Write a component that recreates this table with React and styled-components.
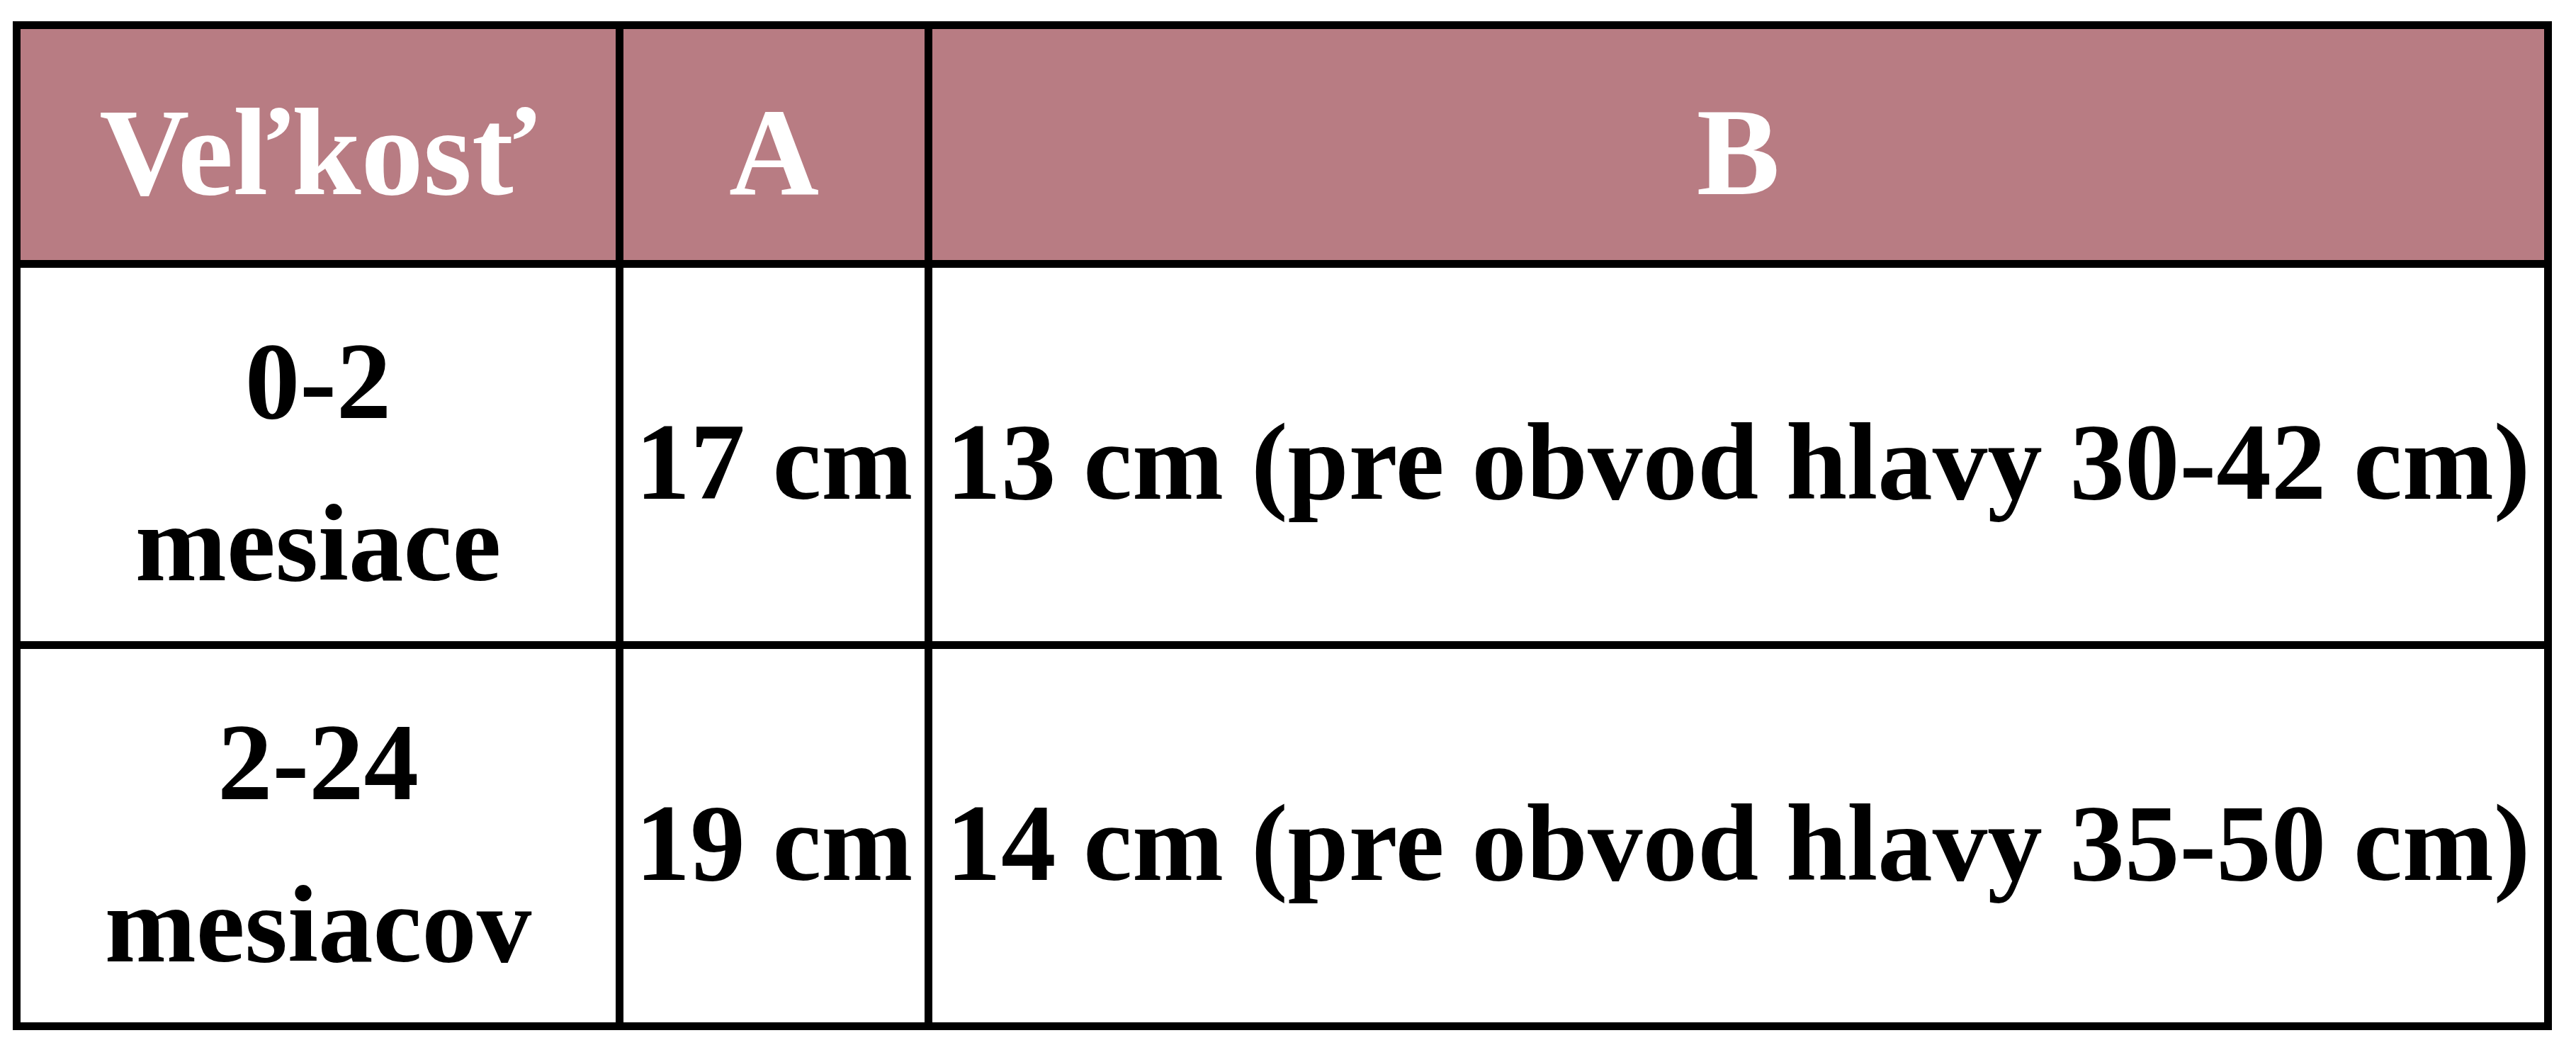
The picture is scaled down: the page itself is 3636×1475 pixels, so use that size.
import React from 'react';
import styled, { createGlobalStyle } from 'styled-components';

const GlobalStyle = createGlobalStyle`
    html, body {
        margin: 0;
        padding: 0;
        background: #ffffff;
    }

    body {
        font-family: "Liberation Serif", "Times New Roman", serif;
    }
`;

const Page = styled.div`
    padding: 30px 0 0 18px;
`;

const SizeTable = styled.div`
    display: inline-grid;
    grid-template-columns: 840px 425px 2275px;
    grid-template-rows: 326px 527px 527px;
    gap: 11px;
    padding: 11px;
    background: #000;
`;

const Cell = styled.div`
    display: flex;
    align-items: center;
    justify-content: center;
    text-align: center;
    box-sizing: border-box;
    padding-top: 22px;
    background: ${({ $head }) => ($head ? '#b87c83' : '#ffffff')};
    color: ${({ $head }) => ($head ? '#ffffff' : '#000000')};
    font-size: ${({ $head }) => ($head ? '176px' : '155px')};
    font-weight: 700;
    line-height: ${({ $head }) => ($head ? 'normal' : '229px')};
    white-space: nowrap;
`;

const rows = [
    { size: ['0-2', 'mesiace'], a: '17 cm', b: '13 cm (pre obvod hlavy 30-42 cm)' },
    { size: ['2-24', 'mesiacov'], a: '19 cm', b: '14 cm (pre obvod hlavy 35-50 cm)' },
];

const App = () => {
    return (
        <Page>
            <GlobalStyle />
            <SizeTable>
                <Cell $head>Veľkosť</Cell>
                <Cell $head>A</Cell>
                <Cell $head>B</Cell>
                {rows.map((row) => (
                    <React.Fragment key={row.a}>
                        <Cell>
                            {row.size[0]}
                            <br />
                            {row.size[1]}
                        </Cell>
                        <Cell>{row.a}</Cell>
                        <Cell>{row.b}</Cell>
                    </React.Fragment>
                ))}
            </SizeTable>
        </Page>
    );
};

export default App;
